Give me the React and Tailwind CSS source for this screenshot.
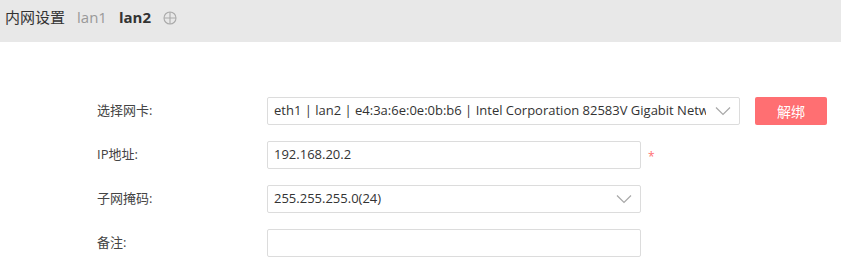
import React from 'react';

const font = { fontFamily: '"Open Sans", "Noto Sans CJK SC", sans-serif' };

const Chevron = () => (
  <svg width="16" height="10" viewBox="0 0 16 10" className="shrink-0 ml-[9px] text-[#a8a8a8]">
    <path d="M1 1.5 L8 8.5 L15 1.5" fill="none" stroke="currentColor" strokeWidth="1.2" />
  </svg>
);

const Row = ({ label, children }) => (
  <div className="flex items-center h-[28px]">
    <div className="w-[170px] text-[13px] text-[#444]">{label}</div>
    {children}
  </div>
);

const SelectBox = ({ value, width }) => (
  <div className={`${width} h-[28px] border border-[#dcdcdc] rounded-[2px] flex items-center pl-[6px] pr-[8px] bg-white`}>
    <span className="flex-1 min-w-0 whitespace-nowrap overflow-hidden text-[13px] text-[#333]">{value}</span>
    <Chevron />
  </div>
);

const InputBox = ({ value }) => (
  <div className="w-[374px] h-[28px] border border-[#dcdcdc] rounded-[2px] flex items-center px-[6px] bg-white text-[13px] text-[#333]">
    {value}
  </div>
);

export default function App() {
  return (
    <div className="w-[841px] h-[272px] bg-white" style={font}>
      <div className="h-[42px] bg-[#e8e8e8] flex items-start pt-[6px] pl-[5px]">
        <span className="text-[15px] text-[#333]">内网设置</span>
        <span className="text-[15px] text-[#999] ml-[12px]">lan1</span>
        <span className="text-[15px] text-[#333] font-bold ml-[12px]">lan2</span>
        <svg width="14" height="14" viewBox="0 0 14 14" className="ml-[12px] mt-[5px] text-[#aaa]">
          <circle cx="7" cy="7" r="6" fill="none" stroke="currentColor" strokeWidth="1.1" />
          <path d="M7 1 V13 M1 7 H13" stroke="currentColor" strokeWidth="1.1" />
        </svg>
      </div>
      <div className="pl-[97px] pt-[55px] flex flex-col gap-[16px]">
        <Row label="选择网卡:">
          <SelectBox width="w-[473px]" value="eth1 | lan2 | e4:3a:6e:0e:0b:b6 | Intel Corporation 82583V Gigabit Network Connection" />
          <button className="ml-[15px] w-[72px] h-[28px] rounded-[2px] bg-[#ff6f72] text-white text-[14px]">解绑</button>
        </Row>
        <Row label="IP地址:">
          <InputBox value="192.168.20.2" />
          <span className="ml-[7px] text-[#ff6f72] text-[12px] mt-[4px]">*</span>
        </Row>
        <Row label="子网掩码:">
          <SelectBox width="w-[374px]" value="255.255.255.0(24)" />
        </Row>
        <Row label="备注:">
          <InputBox value="" />
        </Row>
      </div>
    </div>
  );
}
